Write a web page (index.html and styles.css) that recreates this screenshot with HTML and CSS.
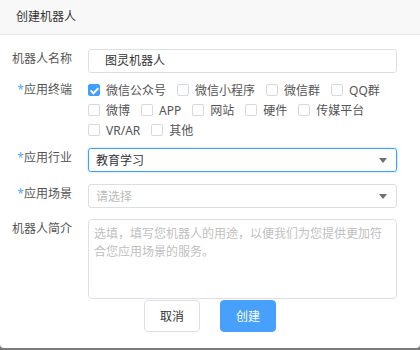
FILE: index.html
```html
<!DOCTYPE html>
<html>
<head>
<meta charset="utf-8">
<link rel="stylesheet" href="styles.css">
</head>
<body>

<div class="dialog">
  <div class="dialog-head">创建机器人</div>

  <div class="dialog-body">
    <div class="row row-name">
      <label class="row-label">机器人名称</label>
      <div class="text-input">图灵机器人</div>
    </div>

    <div class="row row-terminal">
      <label class="row-label"><span class="req">*</span>应用终端</label>
      <div class="checks">
        <span class="check"><i class="box on"></i>微信公众号</span>
        <span class="check"><i class="box"></i>微信小程序</span>
        <span class="check"><i class="box"></i>微信群</span>
        <span class="check"><i class="box"></i>QQ群</span>
        <span class="check"><i class="box"></i>微博</span>
        <span class="check"><i class="box"></i>APP</span>
        <span class="check"><i class="box"></i>网站</span>
        <span class="check"><i class="box"></i>硬件</span>
        <span class="check"><i class="box"></i>传媒平台</span>
        <span class="check"><i class="box"></i>VR/AR</span>
        <span class="check"><i class="box"></i>其他</span>
      </div>
    </div>

    <div class="row row-industry">
      <label class="row-label"><span class="req">*</span>应用行业</label>
      <div class="select focus"><span>教育学习</span><i class="caret"></i></div>
    </div>

    <div class="row row-scene">
      <label class="row-label"><span class="req">*</span>应用场景</label>
      <div class="select"><span class="placeholder">请选择</span><i class="caret"></i></div>
    </div>

    <div class="row row-intro">
      <label class="row-label">机器人简介</label>
      <textarea class="intro" placeholder="选填，填写您机器人的用途，以便我们为您提供更加符合您应用场景的服务。"></textarea>
    </div>

    <div class="actions">
      <button class="btn">取消</button>
      <button class="btn btn-primary">创建</button>
    </div>
  </div>
</div>

</body>
</html>
```

FILE: styles.css
```css
* {box-sizing: border-box;}

body {
  margin: 0;
  height: 350px;
  background: #7b7b7b;
  font-family: "Noto Sans", "Noto Sans CJK SC", sans-serif;
  font-size: 12px;
  color: #333;
}

.dialog {
  height: 348px;
  background: #fff;
  border-radius: 0 0 4px 4px;
  overflow: hidden;
}

.dialog-head {
  height: 35px;
  padding-left: 16px;
  line-height: 34px;
  background: #f8f8f8;
  border-bottom: 1px solid #e9e9e9;
  color: #333;
}

.dialog-body {
  padding-top: 14px;
}

.row {
  display: flex;
  align-items: flex-start;
}

.row-label {
  width: 72px;
  margin-right: 16px;
  text-align: right;
  line-height: 19px;
  color: #555;
  flex-shrink: 0;
}

.req {color: #52a8ff;}

.row-name {margin-bottom: 7px;}
.row-terminal {margin-bottom: 8px;}
.row-industry {margin-bottom: 12px;}
.row-scene {margin-bottom: 11px;}
.row-intro {margin-bottom: 1px;}

.text-input {
  width: 309px;
  height: 24px;
  padding-left: 16px;
  line-height: 22px;
  border: 1px solid #dcdfe6;
  border-radius: 3px;
  color: #333;
}

.checks {
  width: 309px;
  display: flex;
  flex-wrap: wrap;
}

.check {
  display: flex;
  align-items: center;
  height: 20px;
  margin-right: 11px;
  color: #555;
}

.box {
  width: 12px;
  height: 12px;
  margin-right: 6px;
  border: 1px solid #d5d9e0;
  border-radius: 2px;
  background: #fff;
  position: relative;
}

.box.on {
  background: #409eff;
  border-color: #409eff;
}

.box.on::after {
  content: "";
  position: absolute;
  left: 3px;
  top: 1px;
  width: 3px;
  height: 6px;
  border: solid #fff;
  border-width: 0 2px 2px 0;
  transform: rotate(45deg);
}

.select {
  width: 309px;
  height: 24px;
  padding: 0 9px 0 7px;
  display: flex;
  align-items: center;
  justify-content: space-between;
  border: 1px solid #dcdfe6;
  border-radius: 3px;
  color: #333;
}

.select.focus {
  border-color: #409eff;
  box-shadow: 0 0 2px rgba(64, 158, 255, 0.5);
}

.placeholder {color: #bbb;}

.caret {
  width: 0;
  height: 0;
  border-left: 4px solid transparent;
  border-right: 4px solid transparent;
  border-top: 5px solid #6f6f6f;
}

.intro {
  width: 309px;
  height: 80px;
  margin: 0;
  padding: 5px 5px;
  border: 1px solid #dcdfe6;
  border-radius: 4px;
  resize: none;
  font-family: "Noto Sans", "Noto Sans CJK SC", sans-serif;
  font-size: 12px;
  line-height: 18px;
  color: #333;
  outline: none;
}

.intro::placeholder {color: #c0c0c0;}

.actions {
  display: flex;
  justify-content: center;
  gap: 20px;
}

.btn {
  width: 56px;
  height: 32px;
  border: 1px solid #dcdfe6;
  border-radius: 4px;
  background: #fff;
  color: #333;
  font-family: "Noto Sans", "Noto Sans CJK SC", sans-serif;
  font-size: 12px;
  padding: 0;
}

.btn-primary {
  background: #46a0fc;
  border-color: #46a0fc;
  color: #fff;
}
```
